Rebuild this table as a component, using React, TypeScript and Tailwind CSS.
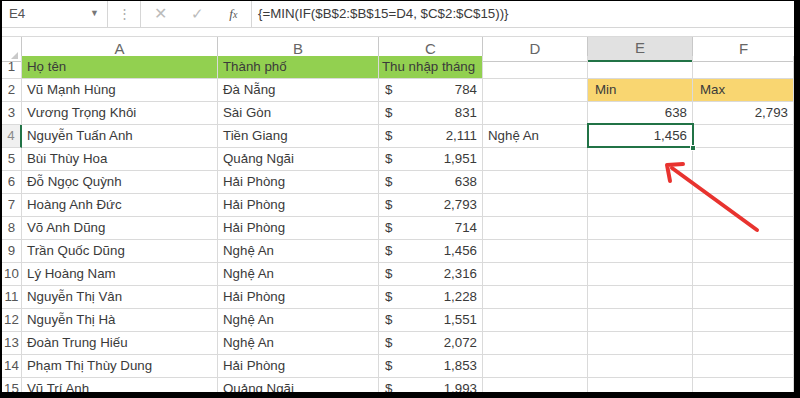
const rows: [string, string, string][] = [
  ['Vũ Mạnh Hùng', 'Đà Nẵng', '784'],
  ['Vương Trọng Khôi', 'Sài Gòn', '831'],
  ['Nguyễn Tuấn Anh', 'Tiền Giang', '2,111'],
  ['Bùi Thùy Hoa', 'Quảng Ngãi', '1,951'],
  ['Đỗ Ngọc Quỳnh', 'Hải Phòng', '638'],
  ['Hoàng Anh Đức', 'Hải Phòng', '2,793'],
  ['Võ Anh Dũng', 'Hải Phòng', '714'],
  ['Trần Quốc Dũng', 'Nghệ An', '1,456'],
  ['Lý Hoàng Nam', 'Nghệ An', '2,316'],
  ['Nguyễn Thị Vân', 'Hải Phòng', '1,228'],
  ['Nguyễn Thị Hà', 'Nghệ An', '1,551'],
  ['Đoàn Trung Hiếu', 'Nghệ An', '2,072'],
  ['Phạm Thị Thùy Dung', 'Hải Phòng', '1,853'],
  ['Vũ Trí Anh', 'Quảng Ngãi', '1,993'],
]

const cols = 'grid grid-cols-[20px_196px_161px_104px_105px_105px_101px]'
const cell = 'h-[23px] border-r border-b border-[#dadada] flex items-center px-[5px] whitespace-nowrap overflow-hidden'

function Extra({ r }: { r: number }) {
  // columns D, E, F for data row r (2..15)
  if (r === 2)
    return (
      <>
        <div className={cell} />
        <div className={`${cell} bg-[#f9d671] pl-[7px]`}>Min</div>
        <div className={`${cell} bg-[#f9d671] pl-[7px]`}>Max</div>
      </>
    )
  if (r === 3)
    return (
      <>
        <div className={cell} />
        <div className={`${cell} justify-end`}>638</div>
        <div className={`${cell} justify-end`}>2,793</div>
      </>
    )
  if (r === 4)
    return (
      <>
        <div className={cell}>Nghệ An</div>
        <div className={`${cell} justify-end relative overflow-visible`}>
          1,456
          <div className="absolute -left-px -top-[2px] w-[107px] h-[25px] border-2 border-[#217346]" />
          <div className="absolute -right-[4px] -bottom-[4px] w-[6px] h-[6px] bg-[#217346] border border-white" />
        </div>
        <div className={cell} />
      </>
    )
  return (
    <>
      <div className={cell} />
      <div className={cell} />
      <div className={cell} />
    </>
  )
}

export default function App() {
  return (
    <div className="w-[800px] h-[398px] bg-black overflow-hidden pt-px pl-[2px] pr-[6px] pb-[6px]">
      <div className="relative w-[792px] h-[391px] bg-white overflow-hidden text-[13.3px] text-[#3a3a3a] font-['Liberation_Sans',Arial,sans-serif]">
        {/* formula bar */}
        <div className="flex h-[27px] border-b border-[#d6d6d6] text-[#555]">
          <div className="w-[106px] flex items-center justify-between pl-[7px] pr-[8px] border-r border-[#d6d6d6]">
            <span>E4</span>
            <span className="text-[9px] text-[#777]">▼</span>
          </div>
          <div className="w-[32px] flex items-center justify-center text-[#aaa]">⋮</div>
          <div className="w-[112px] flex items-center border-l border-r border-[#d6d6d6] text-[#bbb]">
            <span className="w-[40px] text-center text-[16px]">✕</span>
            <span className="w-[36px] text-center text-[15px]">✓</span>
            <span className="w-[36px] text-center font-['Liberation_Serif',serif] italic text-[#555]">
              f<span className="text-[10px]">x</span>
            </span>
          </div>
          <div className="flex-1 flex items-center pl-[6px] text-[#3a3a3a]">
            {'{=MIN(IF($B$2:$B$15=D4, $C$2:$C$15))}'}
          </div>
        </div>

        <div className="h-[8px]" />

        {/* column headers */}
        <div className={`${cols} h-[20px] border-t border-[#dadada] text-[#666] text-[15px]`}>
          <div className="border-r border-b border-[#c8c8c8] flex items-end justify-end pr-[3px] pb-[2px]">
            <div className="w-0 h-0 border-l-[7px] border-l-transparent border-b-[7px] border-b-[#c9c9c9]" />
          </div>
          {['A', 'B', 'C', 'D'].map((c) => (
            <div key={c} className="border-r border-b border-[#c8c8c8] flex items-center justify-center">
              {c}
            </div>
          ))}
          <div className="bg-[#e1e1e1] border-r border-b-2 border-r-[#c8c8c8] border-b-[#217346] flex items-center justify-center">
            E
          </div>
          <div className="border-b border-[#c8c8c8] flex items-center justify-center">F</div>
        </div>

        {/* row 1 */}
        <div className={cols}>
          <div className={`${cell} justify-center px-0 text-[#555]`}>1</div>
          <div className={`${cell} bg-[#92d050]`}>Họ tên</div>
          <div className={`${cell} bg-[#92d050]`}>Thành phố</div>
          <div className={`${cell} bg-[#92d050] pl-[3px]`}>Thu nhập tháng</div>
          <div className={cell} />
          <div className={cell} />
          <div className={cell} />
        </div>

        {rows.map(([name, city, amount], i) => {
          const r = i + 2
          return (
            <div key={r} className={cols}>
              <div
                className={`${cell} justify-center px-0 ${
                  r === 4 ? 'text-[#8a8a8a] bg-[#f0f0f0] border-r-2 border-r-[#217346]' : 'text-[#555]'
                }`}
              >
                {r}
              </div>
              <div className={cell}>{name}</div>
              <div className={cell}>{city}</div>
              <div className={`${cell} justify-between pl-[6px] pr-[5px]`}>
                <span>$</span>
                <span>{amount}</span>
              </div>
              <Extra r={r} />
            </div>
          )
        })}

        {/* red arrow annotation */}
        <svg className="absolute left-0 top-0 pointer-events-none" width="792" height="391">
          <line x1="755" y1="229" x2="670" y2="167" stroke="#e8332f" strokeWidth="4" strokeLinecap="round" />
          <polyline
            points="668,180 665,164 681,163"
            fill="none"
            stroke="#e8332f"
            strokeWidth="4"
            strokeLinecap="round"
            strokeLinejoin="round"
          />
        </svg>
      </div>
    </div>
  )
}
